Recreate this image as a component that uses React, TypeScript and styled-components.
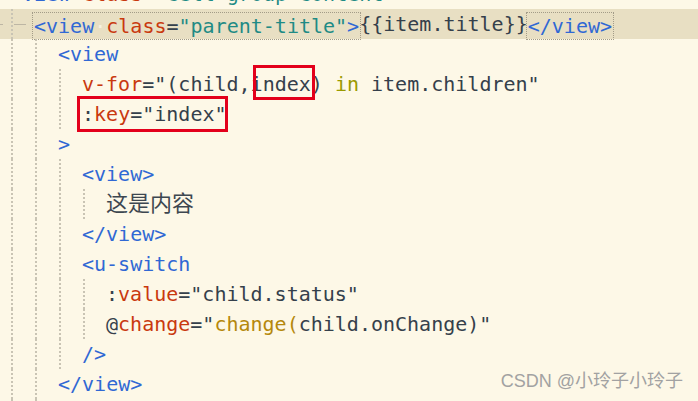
import React from 'react';
import styled, { createGlobalStyle, css } from 'styled-components';

const Global = createGlobalStyle`
  html, body { margin: 0; padding: 0; background: #fdf8e7; overflow: hidden; }
  body { width: 698px; height: 401px; }
`;

type Kind = 'tag' | 'attr' | 'str' | 'txt' | 'kw' | 'fn' | 'ws' | 'cjk';

const palette: Record<Kind, string> = {
  tag: '#3068d4',
  attr: '#c9390f',
  str: '#1f8b85',
  txt: '#35404b',
  kw: '#9a9a00',
  fn: '#b5880c',
  ws: '#f6f1e1',
  cjk: '#3d4750',
};

type Box = { l: number; r: number; t: number; b: number };
type Tok =
  | { t: string; k: Kind }
  | { box: Box; children: Tok[] }
  | { outline: true; children: Tok[] };

type Line = { guides: boolean[]; toks: Tok[]; hl?: boolean; fold?: boolean };

const Editor = styled.div`
  position: relative;
  width: 698px;
  height: 401px;
  overflow: hidden;
  background: #fdf8e7;
  font-family: "DejaVu Sans Mono", monospace;
  font-size: 20px;
`;

const Lines = styled.div`
  display: flex;
  flex-direction: column;
  margin-top: -21px;
`;

const Row = styled.div<{ $hl?: boolean }>`
  display: flex;
  height: 30px;
  flex: none;
  background: ${p => (p.$hl ? '#e8dfc3' : 'transparent')};
`;

const Lead = styled.div`
  width: 10px;
  flex: none;
  display: flex;
  align-items: center;
`;

const Guide = styled.div<{ $on: boolean }>`
  width: 24px;
  flex: none;
  display: flex;
  align-items: center;
  ${p =>
    p.$on &&
    css`
      background-image: linear-gradient(to bottom, #c9c4b4 0 50%, transparent 50% 100%);
      background-size: 2px 4px;
      background-repeat: repeat-y;
      background-position: 1px 0;
    `}
`;

const Dash = styled.span<{ $w: number; $ml: number }>`
  display: block;
  width: ${p => p.$w}px;
  margin-left: ${p => p.$ml}px;
  height: 1px;
  background: #bdb6a4;
`;

const Code = styled.div`
  line-height: 30px;
  white-space: pre;
`;

const Token = styled.span<{ $k: Kind }>`
  color: ${p => palette[p.$k]};
  ${p =>
    p.$k === 'cjk' &&
    css`
      font-family: "Noto Sans CJK SC", sans-serif;
      font-size: 22px;
      position: relative;
      top: -3px;
    `}
`;

const TagBox = styled.span`
  display: inline-block;
  line-height: 24px;
  vertical-align: middle;
  outline: 1px dotted #a39c88;
  outline-offset: 1px;
`;

const Mark = styled.span<{ $box: Box }>`
  position: relative;
  display: inline-block;
  line-height: 30px;
  &::after {
    content: '';
    position: absolute;
    left: ${p => p.$box.l}px;
    right: ${p => p.$box.r}px;
    top: ${p => p.$box.t}px;
    bottom: ${p => p.$box.b}px;
    border: 3px solid #e3001b;
    pointer-events: none;
  }
`;

const Watermark = styled.div`
  position: absolute;
  right: 15px;
  top: 369px;
  font-family: "Liberation Sans", "Noto Sans CJK SC", sans-serif;
  font-size: 18px;
  line-height: 24px;
  color: #a2a2a2;
  white-space: nowrap;
`;

const t = (text: string, k: Kind): Tok => ({ t: text, k });

const g = (n: number): boolean[] => Array.from({ length: n }, () => true);

const lines: Line[] = [
  {
    guides: [],
    toks: [t('<view', 'tag'), t(' ', 'txt'), t('class', 'attr'), t('=', 'txt'), t('"cell-group-content"', 'str'), t('>', 'tag')],
  },
  {
    guides: g(1),
    hl: true,
    fold: true,
    toks: [
      { outline: true, children: [t('<view', 'tag'), t('·', 'ws'), t('class', 'attr'), t('=', 'txt'), t('"parent-title"', 'str'), t('>', 'tag')] },
      t('{{item.title}}', 'txt'),
      { outline: true, children: [t('</view>', 'tag')] },
    ],
  },
  { guides: g(2), toks: [t('<view', 'tag')] },
  {
    guides: g(3),
    toks: [
      t('v-for', 'attr'),
      t('="(child,', 'txt'),
      { box: { l: 2, r: -4, t: -4, b: -1 }, children: [t('index', 'txt')] },
      t(') ', 'txt'),
      t('in', 'kw'),
      t(' item.children"', 'txt'),
    ],
  },
  {
    guides: g(3),
    toks: [{ box: { l: -5, r: -1, t: -3, b: -3 }, children: [t(':', 'txt'), t('key', 'attr'), t('="index"', 'txt')] }],
  },
  { guides: g(2), toks: [t('>', 'tag')] },
  { guides: g(3), toks: [t('<view>', 'tag')] },
  { guides: g(4), toks: [t('这是内容', 'cjk')] },
  { guides: g(3), toks: [t('</view>', 'tag')] },
  { guides: g(3), toks: [t('<u-switch', 'tag')] },
  { guides: g(4), toks: [t(':', 'txt'), t('value', 'attr'), t('="child.status"', 'txt')] },
  { guides: g(4), toks: [t('@', 'txt'), t('change', 'attr'), t('="', 'txt'), t('change(', 'fn'), t('child.onChange)"', 'txt')] },
  { guides: g(3), toks: [t('/>', 'tag')] },
  { guides: g(2), toks: [t('</view>', 'tag')] },
  { guides: g(2), toks: [] },
];

const renderTok = (tok: Tok, i: number): React.ReactNode => {
  if ('box' in tok) {
    return (
      <Mark key={i} $box={tok.box}>
        {tok.children.map(renderTok)}
      </Mark>
    );
  }
  if ('outline' in tok) {
    return <TagBox key={i}>{tok.children.map(renderTok)}</TagBox>;
  }
  return (
    <Token key={i} $k={tok.k}>
      {tok.t}
    </Token>
  );
};

export default function App() {
  return (
    <>
      <Global />
      <Editor>
        <Lines>
          {lines.map((line, li) => (
            <Row key={li} $hl={line.hl}>
              <Lead>{line.fold && <Dash $w={3} $ml={0} />}</Lead>
              {line.guides.map((on, gi) => (
                <Guide key={gi} $on={on}>
                  {line.fold && gi === 0 && <Dash $w={12} $ml={4} />}
                </Guide>
              ))}
              <Code>{line.toks.map(renderTok)}</Code>
            </Row>
          ))}
        </Lines>
        <Watermark>CSDN @小玲子小玲子</Watermark>
      </Editor>
    </>
  );
}
